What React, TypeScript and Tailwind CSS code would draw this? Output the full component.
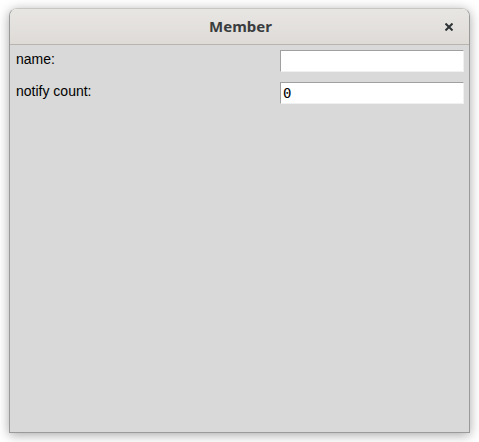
export default function App() {
  return (
    <div className="w-[479px] h-[442px] bg-white pt-[8px] pl-[9px]">
      <div className="w-[461px] h-[425px] flex flex-col rounded-t-[8px] border border-[#9a9a9a] border-t-[#c8c6c2] shadow-[0_2px_12px_rgba(0,0,0,0.35)] overflow-hidden">
        <div className="h-[36px] shrink-0 flex items-center relative bg-gradient-to-b from-[#e8e6e3] to-[#dedbd7] border-b border-[#b8b5b0]">
          <div className="flex-1 text-center text-[15px] font-bold text-[#3a3d3f] font-['Noto_Sans',sans-serif] pl-[2px]">Member</div>
          <button className="absolute right-[10px] top-[8px] w-[20px] h-[20px] flex items-center justify-center">
            <svg width="8" height="8" viewBox="0 0 8 8">
              <path d="M0.5 0.5 L7.5 7.5 M7.5 0.5 L0.5 7.5" stroke="#2e3436" strokeWidth="2" />
            </svg>
          </button>
        </div>
        <div className="flex-1 bg-[#d9d9d9] pl-[6px] pr-[5px] pt-[5px] flex flex-col gap-[10px] font-['Liberation_Sans',Arial,sans-serif] text-[14px] text-black">
          <div className="flex items-start justify-between">
            <div className="leading-[18px]">name:</div>
            <input
              className="w-[184px] h-[22px] bg-white border border-[#a0a0a0] border-b-[#f0f0f0] border-r-[#f0f0f0] outline-none px-[2px] font-['Liberation_Mono',monospace] text-[14px]"
              defaultValue=""
            />
          </div>
          <div className="flex items-start justify-between">
            <div className="leading-[18px]">notify count:</div>
            <input
              className="w-[184px] h-[22px] bg-white border border-[#a0a0a0] border-b-[#f0f0f0] border-r-[#f0f0f0] outline-none px-[2px] font-['DejaVu_Sans_Mono',monospace] text-[14px] text-black"
              defaultValue="0"
            />
          </div>
        </div>
      </div>
    </div>
  );
}
